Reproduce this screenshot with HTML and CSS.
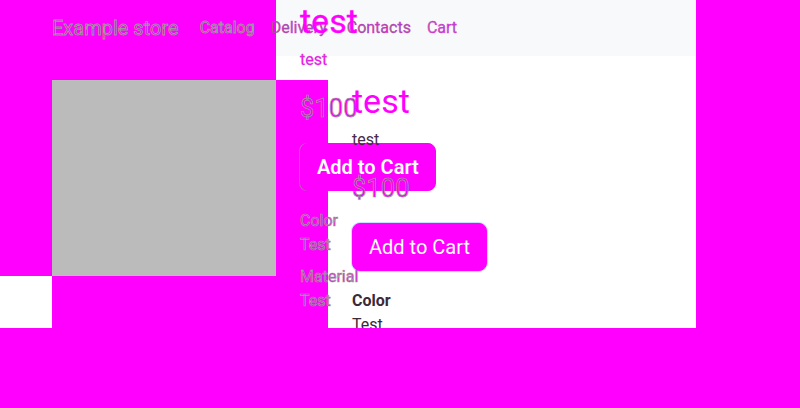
FILE: index.html
```html
<!DOCTYPE html>
<html lang="en">
<head>
<meta charset="utf-8">
<title>Example store</title>
<link rel="stylesheet" href="styles.css">
</head>
<body>
<div class="stage">
  <div class="bg">
    <div class="cell light"></div>
    <div class="cell white-strip"></div>
    <div class="cell white-main"></div>
    <div class="cell photo"></div>
    <div class="cell white-corner"></div>
  </div>

  <nav class="layer nav">
    <span class="brand">Example store</span>
    <ul class="links">
      <li class="ghost">Catalog</li>
      <li class="solid wide">Delivery</li>
      <li class="solid">Contacts</li>
      <li class="solid cart">Cart</li>
    </ul>
  </nav>

  <section class="layer product product-b">
    <h1 class="title">test</h1>
    <p class="desc">test</p>
    <h3 class="price">$100</h3>
    <button class="buy">Add to Cart</button>
    <dl class="specs">
      <dt>Color</dt><dd>Test</dd>
      <dt>Material</dt><dd>Test</dd>
    </dl>
  </section>

  <section class="layer product product-c">
    <h1 class="title">test</h1>
    <p class="desc">test</p>
    <h3 class="price">$100</h3>
    <button class="buy">Add to Cart</button>
    <dl class="specs">
      <dt>Color</dt><dd>Test</dd>
      <dt>Material</dt><dd>Test</dd>
    </dl>
  </section>
</div>
</body>
</html>
```

FILE: styles.css
```css
* { box-sizing: border-box; }

html, body {
  margin: 0;
  padding: 0;
  background: #ff00ff;
  font-family: Roboto, "Liberation Sans", Arial, sans-serif;
}

.stage {
  width: 800px;
  height: 328px;
  overflow: hidden;
  display: grid;
  grid-template-columns: 800px;
  grid-template-rows: 328px;
}

.layer, .bg {
  grid-area: 1 / 1;
}

/* background patches */
.bg {
  display: grid;
  grid-template-columns: 52px 224px 52px 368px 104px;
  grid-template-rows: 56px 24px 196px 52px;
}
.light { grid-column: 3 / 5; grid-row: 1; background: #f8f9fa; }
.white-strip { grid-column: 3; grid-row: 2; background: #ffffff; }
.white-main { grid-column: 4; grid-row: 2 / 5; background: #ffffff; }
.photo { grid-column: 2; grid-row: 3; background: #bbbbbb; }
.white-corner { grid-column: 1; grid-row: 4; background: #ffffff; }

/* navbar layer */
.nav {
  display: flex;
  align-items: center;
  height: 56px;
  padding-left: 52px;
  align-self: start;
}
.brand {
  font-size: 20px;
  line-height: 30px;
  margin-right: 13px;
  color: #ff00ff;
  -webkit-text-stroke: 0.8px #9a9a9a;
}
.links {
  display: flex;
  list-style: none;
  margin: 0;
  padding: 0;
}
.links li {
  font-size: 16px;
  line-height: 24px;
  padding: 0 8px;
}
.links .wide { padding-right: 12px; }
.links .ghost {
  color: #ff00ff;
  -webkit-text-stroke: 0.8px #9a9a9a;
}
.links .solid {
  color: #7a6a7a;
  -webkit-text-stroke: 0.3px #ff00ff;
}
.links .cart {
  color: #9a669a;
}

/* product layers */
.product {
  display: flex;
  flex-direction: column;
  align-items: flex-start;
  align-self: start;
}
.product-b { padding: 1px 0 0 300px; }
.product-c { padding: 81px 0 0 352px; }

.title {
  margin: 0;
  font-size: 34px;
  line-height: 40px;
  font-weight: 400;
}
.desc {
  margin: 7px 0 0;
  font-size: 16px;
  line-height: 24px;
}
.price {
  margin: 21px 0 0;
  font-size: 25.6px;
  line-height: 30.7px;
  font-weight: 400;
}
.buy {
  margin-top: 19px;
  height: 48px;
  padding: 8px 16px;
  font-family: inherit;
  font-size: 20px;
  line-height: 30px;
  border-radius: 8px;
  border: 1px solid #ff00ff;
  background: #ff00ff;
  color: #ffffff;
  -webkit-text-stroke: 0;
}
.specs {
  margin: 18px 0 0;
  font-size: 16px;
  line-height: 24px;
}
.specs dt { font-weight: 700; }
.specs dd { margin: 0 0 8px; }

/* layer B: ghosted copy */
.product-b {
  color: #ff00ff;
  -webkit-text-stroke: 0.7px #9a9a9a;
}
.product-b .title {
  -webkit-text-stroke: 0.3px #ff00ff;
}
.product-b .desc {
  -webkit-text-stroke: 0.3px #b070b0;
}
.product-b .buy {
  font-weight: 600;
  border-color: #ff00ff;
  box-shadow: -1px 0 0 0 rgba(154, 154, 154, 0.6);
}
.product-b .specs dt { font-weight: 400; }

/* layer C: offset copy */
.product-c .title { color: #ff00ff; }
.product-c .desc { color: #4a2a4a; }
.product-c .price {
  color: #ff00ff;
  -webkit-text-stroke: 0.7px #9a9a9a;
}
.product-c .buy {
  font-weight: 400;
  box-shadow: 0 0 0 1px rgba(80, 150, 255, 0.3);
}
.product-c .specs { color: #3a2a3a; }
```
